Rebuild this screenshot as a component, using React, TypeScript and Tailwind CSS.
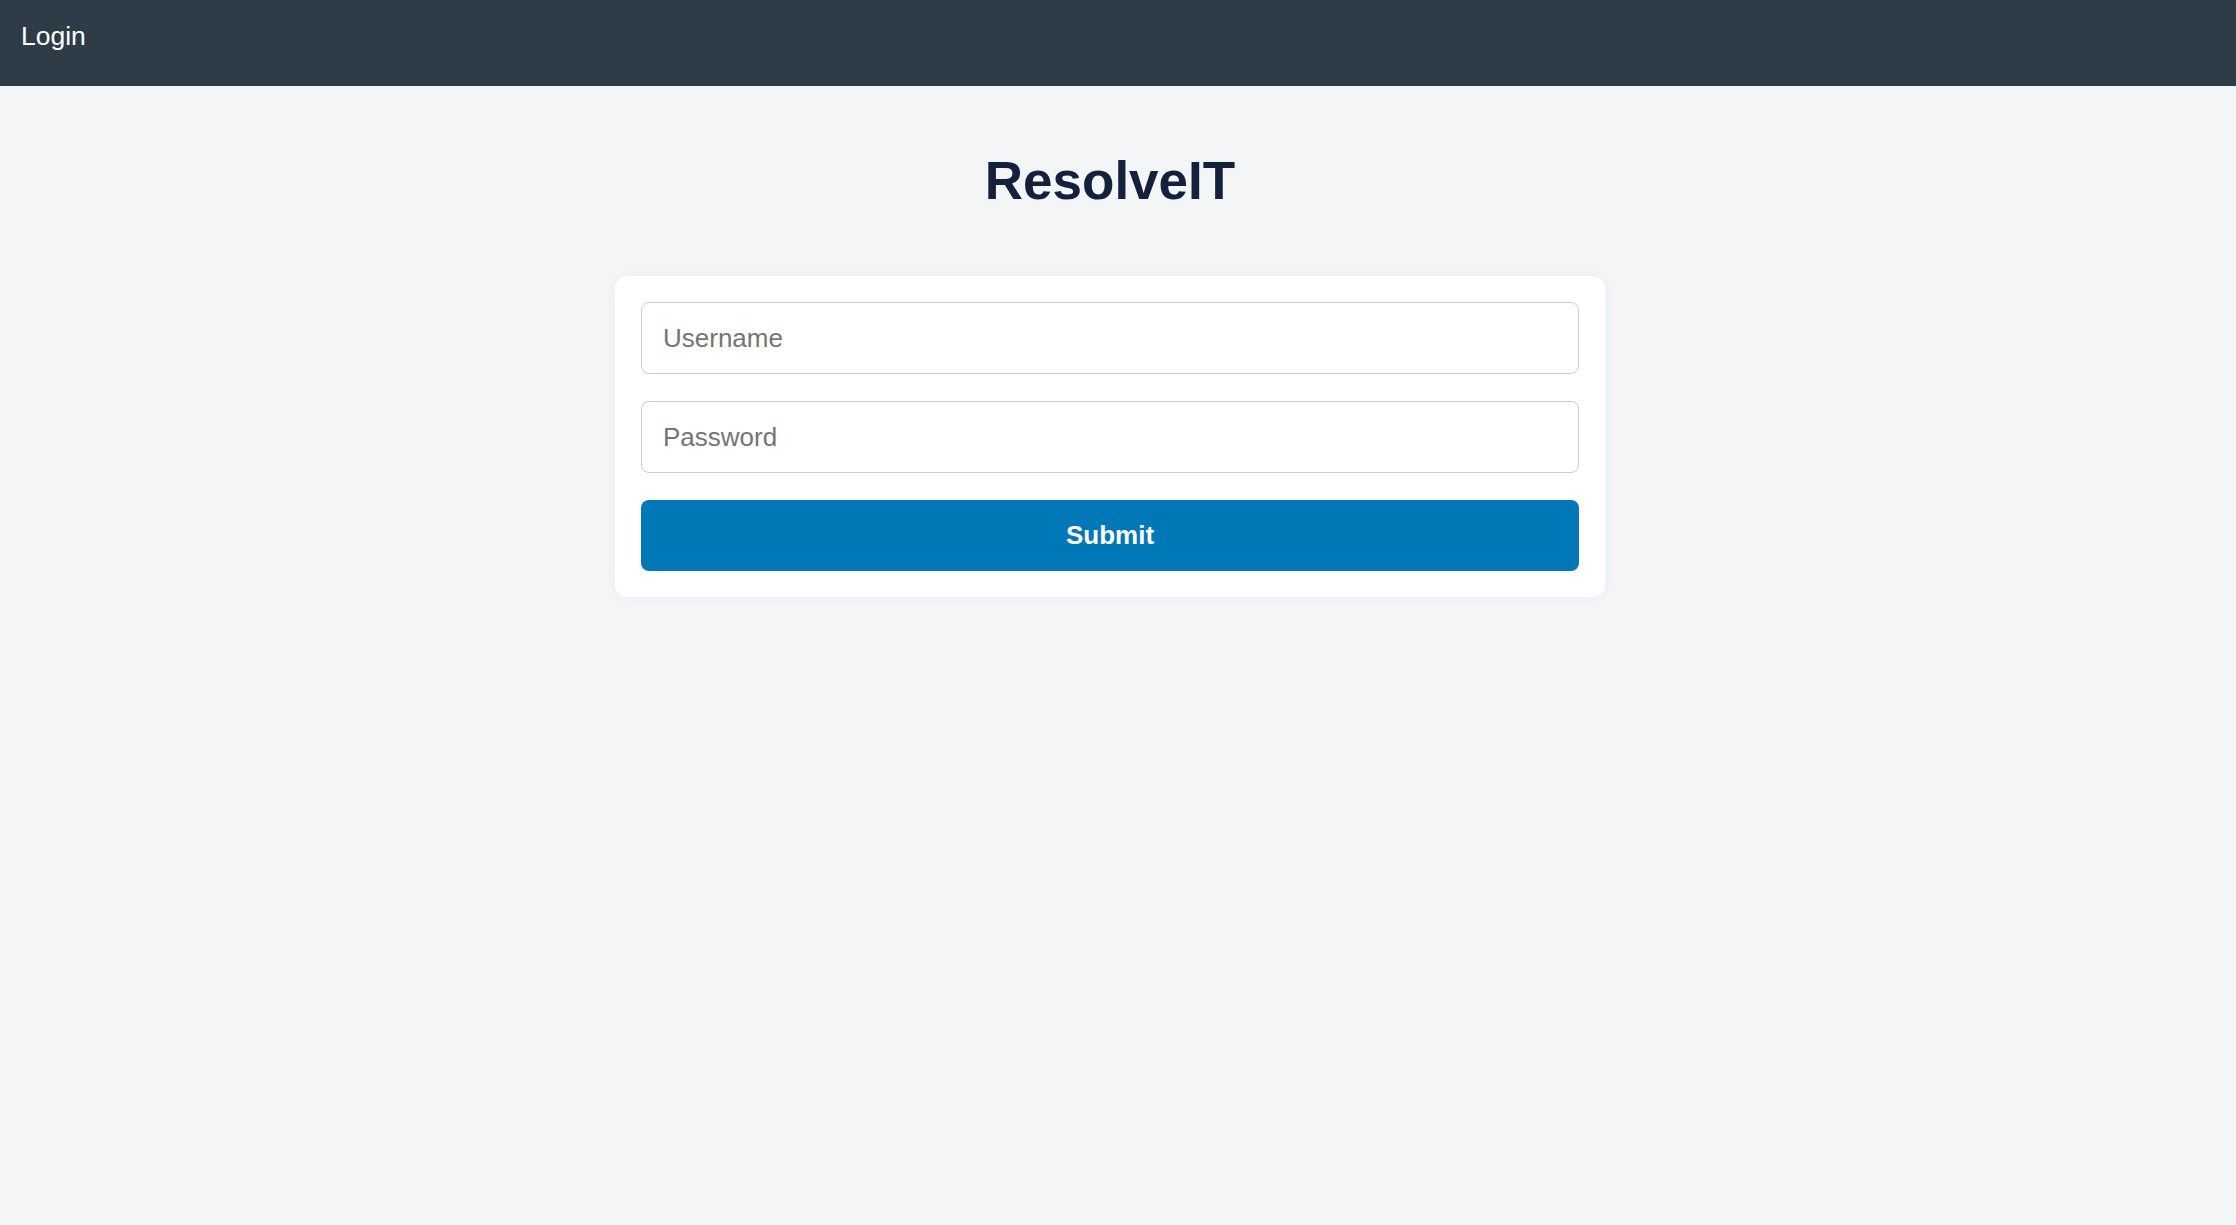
export default function App() {
  return (
    <div className="min-h-[1225px] w-full bg-[#f4f5f7]" style={{ fontFamily: '"Liberation Sans", Arial, sans-serif' }}>
      <header className="h-[86px] bg-[#2e3c47] px-[21px] pt-[21px]">
        <span className="text-[26.5px] leading-[30px] text-white">Login</span>
      </header>
      <main className="flex flex-col items-center pr-[16px]">
        <h1 className="mt-[65px] mb-[65px] text-[53px] font-bold leading-[60px] text-[#14213d]">ResolveIT</h1>
        <form
          className="flex w-[990px] flex-col gap-[27px] rounded-[12px] bg-white p-[26px] shadow-[0_0_16px_rgba(0,0,0,0.04)]"
          onSubmit={(e) => e.preventDefault()}
        >
          <input
            type="text"
            placeholder="Username"
            className="h-[72px] w-full rounded-[8px] border border-[#cccccc] bg-white px-[21px] text-[26px] text-[#333] placeholder:text-[#757575] outline-none"
          />
          <input
            type="password"
            placeholder="Password"
            className="h-[72px] w-full rounded-[8px] border border-[#cccccc] bg-white px-[21px] text-[26px] text-[#333] placeholder:text-[#757575] outline-none"
          />
          <button
            type="submit"
            className="h-[71px] w-full rounded-[8px] bg-[#0077b6] text-[26px] font-bold text-white"
          >
            Submit
          </button>
        </form>
      </main>
    </div>
  );
}
